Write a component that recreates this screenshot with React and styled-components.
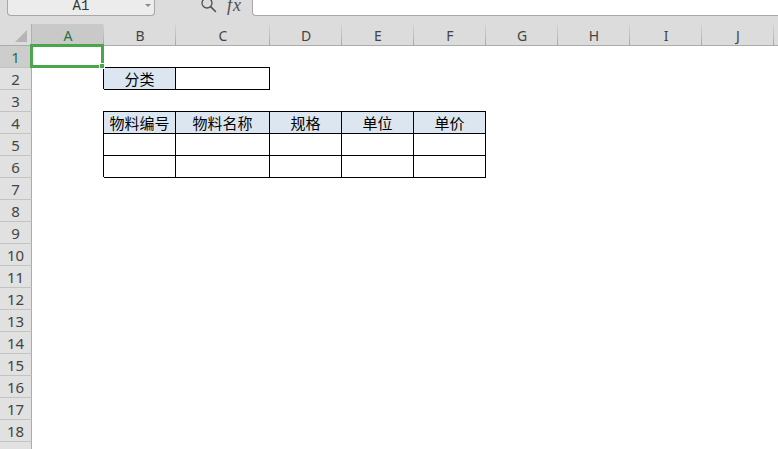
import styled, { createGlobalStyle } from "styled-components";

const GlobalStyle = createGlobalStyle`
  html, body {
    margin: 0;
    padding: 0;
    background: #ffffff;
    overflow: hidden;
  }
  body {
    width: 778px;
    height: 449px;
    font-family: "Noto Sans", "Noto Sans CJK SC", sans-serif;
  }
`;

const columns = [
  { key: "A", width: 72 },
  { key: "B", width: 72 },
  { key: "C", width: 94 },
  { key: "D", width: 72 },
  { key: "E", width: 72 },
  { key: "F", width: 72 },
  { key: "G", width: 72 },
  { key: "H", width: 72 },
  { key: "I", width: 72 },
  { key: "J", width: 72 },
  { key: "K", width: 72, label: "" },
];

// cell content by row number, keyed by column letter
const sheet = {
  2: { B: { text: "分类", fill: true }, C: {} },
  4: {
    B: { text: "物料编号", fill: true },
    C: { text: "物料名称", fill: true },
    D: { text: "规格", fill: true },
    E: { text: "单位", fill: true },
    F: { text: "单价", fill: true },
  },
  5: { B: {}, C: {}, D: {}, E: {}, F: {} },
  6: { B: {}, C: {}, D: {}, E: {}, F: {} },
};

const rowCount = 19;

function SearchIcon() {
  return (
    <svg width="20" height="14" viewBox="0 0 20 14">
      <circle cx="7" cy="3" r="5" fill="none" stroke="#505050" strokeWidth="1.3" />
      <path d="M10.6 6.6 L15.5 11.5" stroke="#505050" strokeWidth="1.5" strokeLinecap="round" />
    </svg>
  );
}

function CornerMark() {
  return (
    <svg width="12" height="12" viewBox="0 0 12 12">
      <polygon points="12,0 12,12 0,12" fill="#b5b5b5" />
    </svg>
  );
}

function App() {
  const template = ["32px", ...columns.map((c) => `${c.width}px`)].join(" ");
  const rows = Array.from({ length: rowCount }, (_, i) => i + 1);

  return (
    <>
      <GlobalStyle />
      <Page>
        <FormulaBar>
          <NameBox>
            <NameText>A1</NameText>
            <DropArrow />
          </NameBox>
          <BarTools>
            <SearchIcon />
            <FxLabel>fx</FxLabel>
          </BarTools>
          <FormulaInput />
        </FormulaBar>

        <Sheet $template={template}>
          <Corner>
            <CornerMark />
          </Corner>
          {columns.map((c) => (
            <ColHeader key={c.key} $active={c.key === "A"}>
              {c.label ?? c.key}
            </ColHeader>
          ))}

          {rows.map((r) => (
            <Row key={r} r={r} />
          ))}
        </Sheet>
      </Page>
    </>
  );
}

function Row({ r }) {
  const data = sheet[r] || {};
  return (
    <>
      <RowHeader $active={r === 1}>{r}</RowHeader>
      {columns.map((c) => {
        const cell = data[c.key];
        const selected = r === 1 && c.key === "A";
        return (
          <Cell
            key={c.key}
            $bordered={!!cell}
            $fill={cell?.fill}
            $selected={selected}
          >
            {cell?.text}
            {selected && (
              <Selection>
                <FillHandle />
              </Selection>
            )}
          </Cell>
        );
      })}
    </>
  );
}

export default App;

const Page = styled.div`
  width: 778px;
  height: 449px;
  overflow: hidden;
  background: #ffffff;
`;

const FormulaBar = styled.div`
  display: flex;
  align-items: flex-start;
  height: 24px;
  background: #dcdcdc;
`;

const NameBox = styled.div`
  display: flex;
  justify-content: center;
  position: relative;
  box-sizing: border-box;
  margin-left: 7px;
  width: 148px;
  height: 16px;
  background: #ececec;
  border: 1px solid #a8a8a8;
  border-top: none;
  border-radius: 0 0 4px 4px;
  overflow: hidden;
`;

const NameText = styled.span`
  font-family: "Liberation Mono", monospace;
  font-size: 14px;
  line-height: 12px;
  color: #333333;
`;

const DropArrow = styled.span`
  position: absolute;
  right: 3px;
  top: 4px;
  width: 0;
  height: 0;
  border-left: 3px solid transparent;
  border-right: 3px solid transparent;
  border-top: 3px solid #8a8a8a;
`;

const BarTools = styled.div`
  display: flex;
  align-items: flex-start;
  gap: 7px;
  margin-left: 45px;
  width: 52px;
`;

const FxLabel = styled.span`
  font-family: "Liberation Serif", serif;
  font-style: italic;
  font-size: 18px;
  line-height: 10px;
  color: #505050;
  letter-spacing: 1px;
`;

const FormulaInput = styled.div`
  flex: 1;
  box-sizing: border-box;
  height: 16px;
  background: #ffffff;
  border: 1px solid #a8a8a8;
  border-top: none;
  border-right: none;
  border-radius: 0 0 0 4px;
`;

const Sheet = styled.div`
  display: grid;
  grid-template-columns: ${(p) => p.$template};
  grid-auto-rows: 22px;
`;

const Corner = styled.div`
  display: flex;
  align-items: flex-end;
  justify-content: flex-end;
  box-sizing: border-box;
  padding: 0 4px 3px 0;
  background: #dcdcdc;
  border-right: 1px solid #b0b0b0;
  border-bottom: 1px solid #ababab;
`;

const ColHeader = styled.div`
  display: flex;
  align-items: center;
  justify-content: center;
  box-sizing: border-box;
  border-bottom: 1px solid #ababab;
  background: linear-gradient(#d6d6d6, #a8a8a8) right / 1px 100% no-repeat,
    ${(p) => (p.$active ? "#c9c9c9" : "#dcdcdc")};
  color: ${(p) => (p.$active ? "#217346" : "#444444")};
  font-family: "Noto Sans", sans-serif;
  font-size: 14px;
  padding-top: 1px;
`;

const RowHeader = styled.div`
  display: flex;
  align-items: center;
  justify-content: center;
  box-sizing: border-box;
  background: ${(p) => (p.$active ? "#cdcdcd" : "#e1e1e1")};
  border-right: 1px solid #ababab;
  border-bottom: 1px solid #c3c3c3;
  color: ${(p) => (p.$active ? "#217346" : "#444444")};
  font-family: "Noto Sans", sans-serif;
  font-size: 15px;
`;

const Cell = styled.div`
  position: ${(p) => (p.$selected ? "relative" : "static")};
  display: flex;
  align-items: center;
  justify-content: center;
  box-sizing: border-box;
  background: ${(p) => (p.$fill ? "#dce6f1" : "#ffffff")};
  border-right: 1px solid ${(p) => (p.$bordered ? "#000000" : "transparent")};
  border-bottom: 1px solid ${(p) => (p.$bordered ? "#000000" : "transparent")};
  box-shadow: ${(p) =>
    p.$bordered ? "-1px -1px 0 #000000, 0 -1px 0 #000000" : "none"};
  font-family: "Noto Sans CJK SC", sans-serif;
  font-size: 15px;
  color: #000000;
`;

const Selection = styled.div`
  position: absolute;
  top: -2px;
  left: -2px;
  right: -1px;
  bottom: -1px;
  border: 3px solid #4aa64a;
  pointer-events: none;
`;

const FillHandle = styled.div`
  position: absolute;
  right: -4px;
  bottom: -4px;
  width: 4px;
  height: 4px;
  background: #4aa64a;
  border: 1px solid #ffffff;
`;
